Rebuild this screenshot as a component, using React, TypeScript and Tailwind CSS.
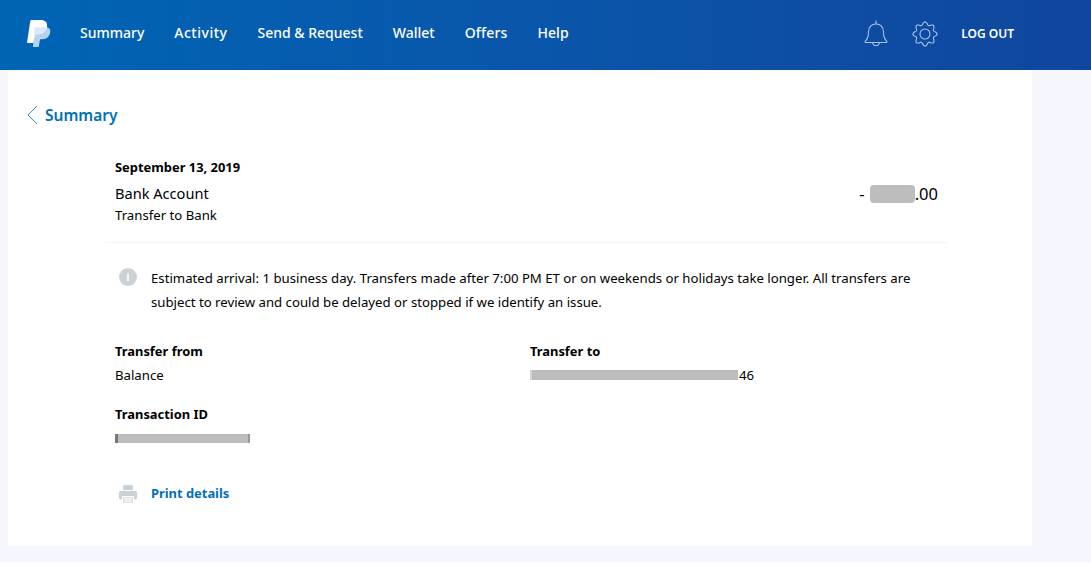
function Logo() {
  return (
    <svg width="24" height="27" viewBox="0 0 24 27" className="mt-[3px] shrink-0">
      <path d="M7.500 7H18c3.800 0 5.800 2.200 5.200 5.500-.7 4.200-3.800 6.700-7.700 6.700h-1.700c-.5 0-.8.300-.9.800L11.700 27H6z" fill="#b5d3f1" />
      <path d="M4.200 0h9.300c4.700 0 7.200 2.400 6.500 6.300-.8 4.900-4.100 8-9.200 8H8.700c-.5 0-.8.300-.9.800L6.300 23H.9c-.6 0-.9-.4-.8-1L3.300.8C3.400.3 3.700 0 4.200 0z" fill="#ffffff" />
      <path d="M7.600 7.300H18c.7 0 1.300.1 1.900.3-1 4.300-4.300 6.700-9.100 6.700H8.700c-.5 0-.8.300-.9.800l-1 4.400z" fill="#dcebfb" />
    </svg>
  );
}
function Bell() {
  return (
    <svg width="24" height="27" viewBox="0 0 24 27" fill="none" stroke="#a9c3e6" strokeWidth="1.100" strokeLinejoin="round" className="mt-[3px]">
      <path d="M12 .5v3.500" />
      <path d="M12 4c-4.500 0-7.500 3.300-7.500 8 0 4.500-.8 6.800-3.200 9.200-.5.600-.2 1.300.5 1.300h20.400c.7 0 1-.7.500-1.300-2.400-2.400-3.200-4.700-3.200-9.200 0-4.700-3-8-7.500-8z" />
      <path d="M8.500 22.500c.3 2 1.700 3.200 3.500 3.200s3.200-1.200 3.500-3.200" />
    </svg>
  );
}
function gearPath() {
  const pts: string[] = [];
  const n = 160;
  for (let i = 0; i < n; i++) {
    const t = (i / n) * Math.PI * 2;
    const r = 10.6 + 1.500 * Math.cos(8 * t);
    pts.push(`${(13 + r * Math.sin(t)).toFixed(2)} ${(13 - r * Math.cos(t)).toFixed(2)}`);
  }
  return `M${pts.join("L")}Z`;
}
function Gear() {
  return (
    <svg width="26" height="26" viewBox="0 0 26 26" fill="none" stroke="#a9c3e6" strokeWidth="1.100" strokeLinejoin="round" className="mt-[3px]">
      <circle cx="13" cy="13" r="5" />
      <path d={gearPath()} />
    </svg>
  );
}
function Printer() {
  return (
    <svg width="18" height="18" viewBox="0 0 18 18">
      <path d="M4 1.500C4 .7 4.700 0 5.500 0h7c.8 0 1.500.7 1.500 1.500V5H4z" fill="#cbd2d6" />
      <path d="M1.500 6h15c.8 0 1.500.7 1.500 1.500V13c0 .8-.7 1.500-1.500 1.500H15V11H3v3.500H1.500C.7 14.500 0 13.800 0 13V7.500C0 6.700.7 6 1.500 6z" fill="#cbd2d6" />
      <path d="M4 12h10v6H4z" fill="#dfe3e6" />
      <path d="M5.500 14h7M5.500 16h7" stroke="#fff" strokeWidth="1" />
    </svg>
  );
}

export default function App() {
  return (
    <div className="h-[564px] w-[1091px] overflow-hidden bg-white text-black font-['Noto_Sans','Open_Sans',sans-serif]">
      <div className="h-[562px] bg-[#f6f7fe]">
        <header className="flex h-[70px] items-center bg-gradient-to-r from-[#0065b5] to-[#10469e] pb-[6px] pl-[27px] pr-[77px] text-white">
          <Logo />
          <nav className="ml-[29px] flex gap-[30px] text-[14px] font-medium">
            <span>Summary</span>
            <span className="tracking-[0.5px]">Activity</span>
            <span>Send &amp; Request</span>
            <span>Wallet</span>
            <span className="tracking-[0.2px]">Offers</span>
            <span>Help</span>
          </nav>
          <div className="ml-auto flex items-center">
            <Bell />
            <div className="ml-[24px]"><Gear /></div>
            <span className="ml-[23px] mt-[4px] text-[12px] font-semibold">LOG OUT</span>
          </div>
        </header>
        <main className="ml-2 h-[476px] w-[1024px] bg-white">
          <div className="flex items-center pl-[18px] pt-[34px] text-[15.500px] font-semibold leading-[22px] text-[#0070ba]">
            <svg width="13" height="20" viewBox="0 0 13 20" fill="none" stroke="#2f8fd8" strokeWidth="1"><path d="M11 1 2 10l9 9" /></svg>
            <span className="ml-[6px]">Summary</span>
          </div>
          <div className="ml-[97px] mr-[85px] mt-[32px]">
            <section className="border-b border-[#f3f5fb] px-[10px] pb-[18px]">
              <div className="text-[12.900px] font-bold leading-[18px]">September 13, 2019</div>
              <div className="mt-[7px] flex items-center justify-between text-[14.600px] leading-[20px]">
                <span>Bank Account</span>
                <span className="-mb-px -mr-px mt-px flex items-center text-[16.500px]">
                  -<span className="ml-[5px] h-[18px] w-[45px] rounded-[4px] bg-[#bdbdbd]" />.00
                </span>
              </div>
              <div className="mt-[3px] text-[13.200px] leading-[18px]">Transfer to Bank</div>
            </section>
            <section className="mt-[23px] flex pl-[14px] pr-[30px]">
              <div className="mt-[2px] flex size-[18px] shrink-0 items-center justify-center rounded-full bg-[#cbd2d6] text-[11px] font-bold text-white">i</div>
              <p className="ml-[14px] text-[13.200px] leading-[24px]">
                Estimated arrival: 1 business day. Transfers made after 7:00 PM ET or on weekends or holidays take longer. All transfers are subject to review and could be delayed or stopped if we identify an issue.
              </p>
            </section>
            <section className="mt-[28px] grid grid-cols-[415px_1fr] px-[10px] text-[13.200px] leading-[18px]">
              <div>
                <div className="text-[12.900px] font-bold">Transfer from</div>
                <div className="mt-[6px]">Balance</div>
              </div>
              <div>
                <div className="text-[12.900px] font-bold">Transfer to</div>
                <div className="mt-[6px] flex items-center">
                  <span className="h-[10px] w-[208px] border-l-2 border-[#d5d5d5] bg-[#bdbdbd]" />
                  <span className="ml-[1px]">46</span>
                </div>
              </div>
              <div className="mt-[21px]">
                <div className="text-[12.900px] font-bold">Transaction ID</div>
                <div className="mt-[6px] flex h-[18px] items-center">
                  <span className="h-[9px] w-[135px] border-l-[3px] border-r-[2px] border-l-[#777777] border-r-[#999999] bg-[#bdbdbd]" />
                </div>
              </div>
            </section>
            <section className="mt-[37px] flex items-center pl-[14px]">
              <Printer />
              <span className="ml-[14px] text-[12.900px] font-bold text-[#0070ba]">Print details</span>
            </section>
          </div>
        </main>
      </div>
    </div>
  );
}
